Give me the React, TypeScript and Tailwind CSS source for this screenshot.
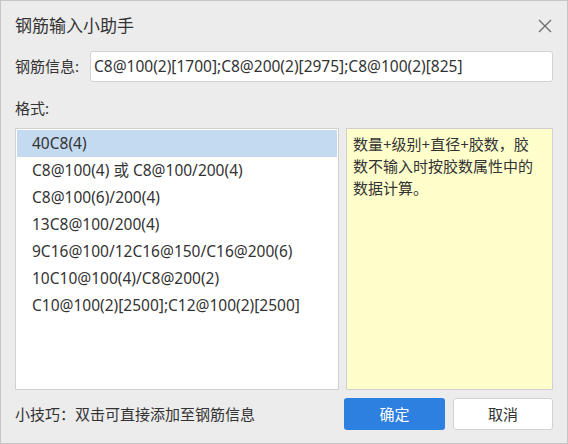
const formats = [
  '40C8(4)',
  'C8@100(4) 或 C8@100/200(4)',
  'C8@100(6)/200(4)',
  '13C8@100/200(4)',
  '9C16@100/12C16@150/C16@200(6)',
  '10C10@100(4)/C8@200(2)',
  'C10@100(2)[2500];C12@100(2)[2500]',
]

const font = { fontFamily: '"Noto Sans", "Noto Sans CJK SC", sans-serif' }

export default function App() {
  return (
    <div
      className="w-[568px] h-[444px] bg-[#ececec] border border-[#c6c6c6] px-[14px] text-[#333333] flex flex-col"
      style={font}
    >
      {/* title bar */}
      <div className="h-[49px] flex items-center justify-between">
        <span className="text-[17px] leading-[22px]">钢筋输入小助手</span>
        <svg width="14" height="14" viewBox="0 0 14 14" className="mr-[1px]">
          <path d="M1 1L13 13M13 1L1 13" stroke="#6b6b6b" strokeWidth="1.3" fill="none" />
        </svg>
      </div>

      <div className="mt-[1px] flex items-center">
        <span className="text-[15px] w-[75px] shrink-0">钢筋信息:</span>
        <div className="flex-1 h-[31px] bg-white border border-[#d2d2d2] rounded-[3px] flex items-center px-[3px] text-[15.5px]">
          C8@100(2)[1700];C8@200(2)[2975];C8@100(2)[825]
        </div>
      </div>

      <div className="mt-[16px] text-[15px] leading-[20px]">格式:</div>

      <div className="mt-[10px] h-[262px] flex gap-[7px]">
        <div className="w-[324px] bg-white border border-[#d0d0d0] pt-[1px] px-[1px]">
          {formats.map((f, i) => (
            <div
              key={f}
              className={
                'h-[27px] flex items-center pl-[15px] text-[15.5px] whitespace-nowrap ' +
                (i === 0 ? 'bg-[#c4daf1]' : '')
              }
            >
              {f}
            </div>
          ))}
        </div>
        <div className="flex-1 bg-[#ffffcc] border border-[#d0d0d0] pl-[6px] pr-[10px] pt-[4px] text-[15px] leading-[22px]">
          数量+级别+直径+胶数，胶数不输入时按胶数属性中的数据计算。
        </div>
      </div>

      <div className="mt-[8px] flex items-center">
        <span className="flex-1 text-[15px]">小技巧：双击可直接添加至钢筋信息</span>
        <button className="w-[101px] h-[32px] rounded-[3px] bg-[#2d7fe0] text-white text-[15px]">
          确定
        </button>
        <button className="ml-[8px] w-[100px] h-[32px] rounded-[3px] bg-white border border-[#d2d2d2] text-[15px]">
          取消
        </button>
      </div>
    </div>
  )
}
